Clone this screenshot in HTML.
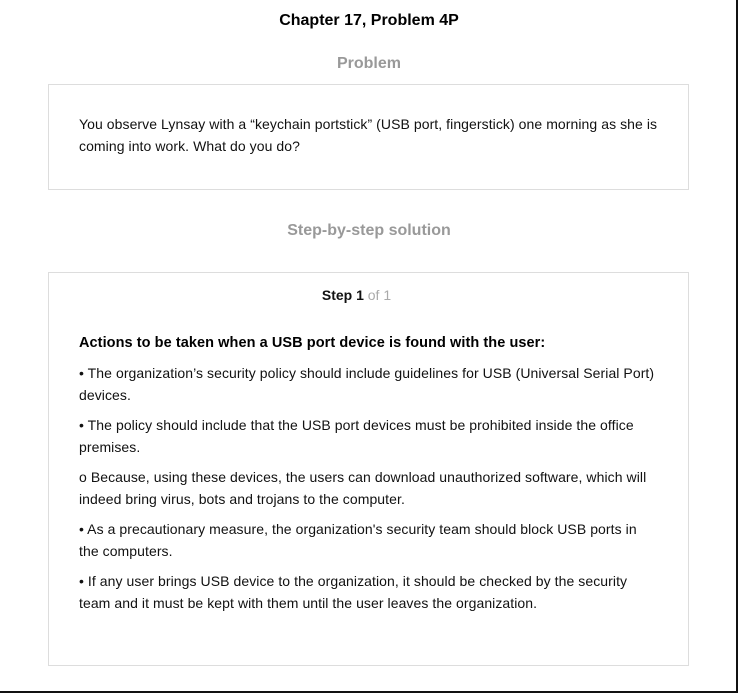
<!DOCTYPE html>
<html><head><meta charset="utf-8"><style>
html,body{margin:0;padding:0;background:#fff}
body{width:738px;height:693px;position:relative;overflow:hidden;font-family:"Liberation Sans",Arial,sans-serif;color:#111}
.frame{position:absolute;left:0;top:0;width:736px;height:691px;border-right:2px solid #111;border-bottom:2px solid #111}
.t{position:absolute;left:0;width:738px;text-align:center;font-weight:bold}
.box{position:absolute;left:48px;width:639px;border:1px solid #ddd;box-sizing:content-box}
p{margin:0;font-size:14px;line-height:22px;position:absolute;left:30px;width:576px;letter-spacing:0.07px}
</style></head><body>
<div class="frame"></div>
<div class="t" style="top:12px;font-size:16px;color:#000">Chapter 17, Problem 4P</div>
<div class="t" style="top:55px;font-size:16px;color:#999">Problem</div>
<div class="box" style="top:84px;height:104px">
<p style="top:28px;width:590px">You observe Lynsay with a “keychain portstick” (USB port, fingerstick) one morning as she is coming into work. What do you do?</p>
</div>
<div class="t" style="top:222px;font-size:16px;color:#999">Step-by-step solution</div>
<div class="box" style="top:272px;height:392px">
<div style="position:absolute;top:14px;left:-12px;width:639px;text-align:center;font-size:14px;line-height:16px"><b style="color:#111">Step 1</b> <span style="color:#aaa">of 1</span></div>
<p style="top:59px;font-weight:bold;color:#000;font-size:14.5px;width:620px">Actions to be taken when a USB port device is found with the user:</p>
<p style="top:89px;width:590px">• The organization’s security policy should include guidelines for USB (Universal Serial Port) devices.</p>
<p style="top:141px">• The policy should include that the USB port devices must be prohibited inside the office premises.</p>
<p style="top:193px">o Because, using these devices, the users can download unauthorized software, which will indeed bring virus, bots and trojans to the computer.</p>
<p style="top:245px">• As a precautionary measure, the organization's security team should block USB ports in the computers.</p>
<p style="top:297px">• If any user brings USB device to the organization, it should be checked by the security team and it must be kept with them until the user leaves the organization.</p>
</div>
</body></html>
